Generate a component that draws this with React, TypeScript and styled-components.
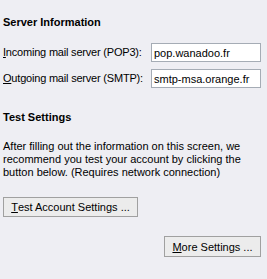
import React from "react";
import styled, { createGlobalStyle } from "styled-components";

const Global = createGlobalStyle`
  html, body { margin: 0; padding: 0; }
  body {
    background: #eeeef3;
    font-family: "Liberation Sans", Arial, sans-serif;
    font-size: 11px;
    color: #000;
  }
`;

const Page = styled.div`
  width: 267px;
  height: 279px;
  box-sizing: border-box;
  padding: 16px 6px 0 3px;
  display: flex;
  flex-direction: column;
`;

const Heading = styled.div<{ $top?: number }>`
  font-weight: bold;
  font-size: 11px;
  line-height: 13px;
  margin-top: ${(p) => p.$top ?? 0}px;
`;

const Row = styled.div<{ $top: number }>`
  display: flex;
  align-items: center;
  margin-top: ${(p) => p.$top}px;
  height: 19px;
`;

const Label = styled.label`
  width: 148px;
  flex: none;
  line-height: 13px;
  white-space: nowrap;
  letter-spacing: -0.2px;
`;

const Key = styled.span`
  text-decoration: underline;
`;

const Field = styled.div`
  width: 111px;
  height: 19px;
  box-sizing: border-box;
  border: 1px solid #a5acb5;
  background: #fff;
  padding: 0 0 0 2px;
  display: flex;
  align-items: center;
  white-space: nowrap;
`;

const Para = styled.p`
  margin: 16px 0 0 0;
  line-height: 13px;
  white-space: nowrap;
`;

const Button = styled.button<{ $w: number; $h: number }>`
  width: ${(p) => p.$w}px;
  height: ${(p) => p.$h}px;
  box-sizing: border-box;
  border: 1px solid #a0a0a0;
  background: #ececec;
  font-family: inherit;
  font-size: 11px;
  color: #000;
  padding: 0;
  display: flex;
  align-items: center;
  justify-content: center;
  margin: 0;
  white-space: nowrap;
`;

const ButtonRow = styled.div<{ $top: number; $end?: boolean }>`
  display: flex;
  justify-content: ${(p) => (p.$end ? "flex-end" : "flex-start")};
  margin-top: ${(p) => p.$top}px;
`;

export default function App() {
  return (
    <>
      <Global />
      <Page>
        <Heading>Server Information</Heading>
        <Row $top={14}>
          <Label>
            <Key>I</Key>ncoming mail server (POP3):
          </Label>
          <Field>pop.wanadoo.fr</Field>
        </Row>
        <Row $top={7}>
          <Label>
            <Key>O</Key>utgoing mail server (SMTP):
          </Label>
          <Field>smtp-msa.orange.fr</Field>
        </Row>
        <Heading $top={23}>Test Settings</Heading>
        <Para>
          After filling out the information on this screen, we
          <br />
          recommend you test your account by clicking the
          <br />
          button below. (Requires network connection)
        </Para>
        <ButtonRow $top={18}>
          <Button $w={135} $h={20}>
            <Key>T</Key>est Account Settings ...
          </Button>
        </ButtonRow>
        <ButtonRow $top={19} $end>
          <Button $w={97} $h={21}>
            <Key>M</Key>ore Settings ...
          </Button>
        </ButtonRow>
      </Page>
    </>
  );
}
